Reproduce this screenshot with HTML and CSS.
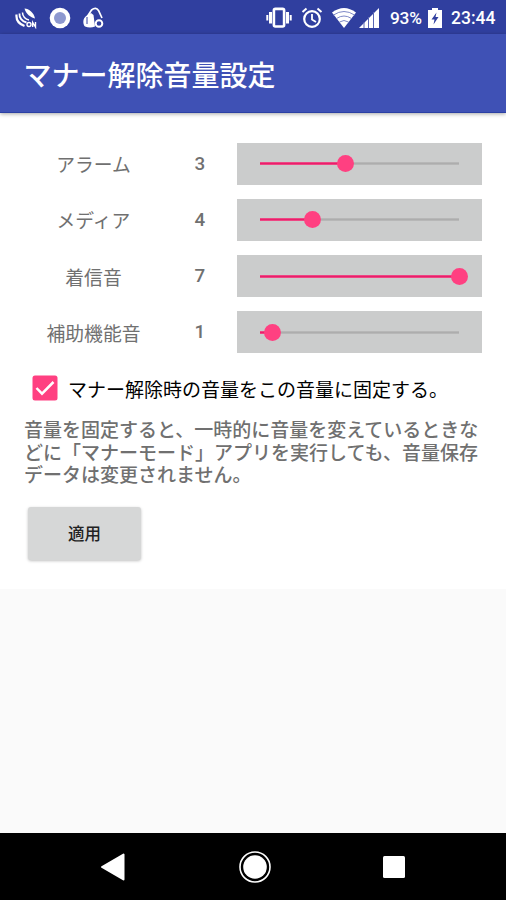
FILE: index.html
```
<!DOCTYPE html>
<html lang="ja">
<head>
<meta charset="utf-8">
<title>マナー解除音量設定</title>
<link rel="stylesheet" href="styles.css">
</head>
<body>
<header class="status">
  <svg class="ic-on" width="22" height="22" viewBox="0 0 22 22" fill="none" stroke="#fff">
    <path d="M9.500 1.500C14 1.500 19 6 20 11.500C15.500 10.500 11 7 9.500 1.500z" fill="#fff" stroke="none"/>
    <path d="M7.500 5.500c0 4 3 7 6.500 7.500" stroke-width="1.500"/>
    <path d="M4.500 6.500c-.5 4 2.500 8 7 9" stroke-width="1.800"/>
    <path d="M1.500 7.500c-.5 5 2.500 9.500 8 11.500" stroke-width="2.200"/>
    <circle cx="14" cy="17.500" r="2" stroke-width="1.400"/>
    <path d="M17.700 20v-4.500l2.800 4.500v-5" stroke-width="1.400"/>
  </svg>
  <svg class="ic-ring" width="22" height="22" viewBox="0 0 22 22">
    <circle cx="11" cy="11" r="10.300" fill="#fff"/><circle cx="11" cy="11" r="6" fill="#8d98cf"/>
  </svg>
  <svg class="ic-bag" width="22" height="22" viewBox="0 0 22 22" fill="none" stroke="#fff">
    <path d="M4 10L8.500 3Q13-.5 15.500 3.500L19 11" stroke-width="1.700"/>
    <path d="M4 8.500C-.5 11 -.5 17 2 19.500Q7 21.500 12 19.500L10.500 8L8 6z" fill="#fff" stroke="none"/>
    <path d="M4 10v7" stroke="#303f9f" stroke-width="1"/>
    <circle cx="16" cy="16.500" r="3.300" fill="#303f9f" stroke-width="2"/>
  </svg>
  <span class="spacer"></span>
  <svg class="ic-vib" width="26" height="22" viewBox="0 0 26 22">
    <rect x="7.900" y="1.900" width="10.200" height="17.600" rx="1.500" fill="none" stroke="#fff" stroke-width="2.600"/>
    <path d="M4.500 5v11.500M21.500 5v11.500" stroke="#fff" stroke-width="3"/>
    <path d="M1.300 8v5.500M24.700 8v5.500" stroke="#fff" stroke-width="2"/>
  </svg>
  <svg class="ic-alarm" width="22" height="22" viewBox="0 0 22 22" fill="none" stroke="#fff">
    <circle cx="11" cy="12" r="7.800" stroke-width="2.200"/><path d="M11 7v5.500l4 2.500" stroke-width="1.800"/>
    <path d="M1.500 5l4-3.500M20.500 5l-4-3.500" stroke-width="2"/>
  </svg>
  <svg class="ic-wifi" width="26" height="22" viewBox="0 0 26 22">
    <path d="M1 5.500Q13-3.500 25 5.500L13 21z" fill="#fff"/>
    <path d="M2.500 8Q13 1 23.500 8M5.500 11.500Q13 6.500 20.500 11.500M8.500 15Q13 12 17.500 15" fill="none" stroke="#7f8ac7" stroke-width="1"/>
  </svg>
  <svg class="ic-signal" width="20" height="20" viewBox="0 0 20 20">
    <path d="M0 20L20 0v20z" fill="#fff"/><path d="M5 14v6M9.500 9v11M14.500 4v16" stroke="#5966b5" stroke-width="1"/>
  </svg>
  <span class="percent">93%</span>
  <svg class="ic-batt" width="14" height="20" viewBox="0 0 14 20">
    <path d="M4 0h6v2h4v18H0V2h4z" fill="#fff"/><path d="M8.500 4.500L3.500 11.500h3L5.500 16.500l5-7.500h-3z" fill="#303f9f"/>
  </svg>
  <span class="clock">23:44</span>
</header>
<h1 class="appbar">マナー解除音量設定</h1>
<main class="content">
  <div class="row"><span class="label">アラーム</span><span class="num">3</span><div class="slider"><div class="track"><div class="fill" style="width:42.860%"></div></div></div></div>
  <div class="row"><span class="label">メディア</span><span class="num">4</span><div class="slider"><div class="track"><div class="fill" style="width:26.670%"></div></div></div></div>
  <div class="row"><span class="label">着信音</span><span class="num">7</span><div class="slider"><div class="track"><div class="fill" style="width:100%"></div></div></div></div>
  <div class="row"><span class="label">補助機能音</span><span class="num">1</span><div class="slider"><div class="track"><div class="fill" style="width:6.670%"></div></div></div></div>
  <div class="check">
    <svg width="26" height="26" viewBox="0 0 26 26"><rect x=".5" y=".5" width="25" height="25" rx="2.500" fill="#ff4081"/><path d="M4.500 13l5.500 5.700L21.500 7" fill="none" stroke="#fff" stroke-width="2.500"/></svg>
    <span>マナー解除時の音量をこの音量に固定する。</span>
  </div>
  <p class="note">音量を固定すると、一時的に音量を変えているときな<br>どに「マナーモード」アプリを実行しても、音量保存<br>データは変更されません。</p>
  <button class="apply">適用</button>
</main>
<nav class="nav">
  <svg width="26" height="30" viewBox="0 0 26 30"><path d="M2 15L23.500 2.500v25z" fill="#fff" stroke="#fff" stroke-width="2" stroke-linejoin="round"/></svg>
  <svg width="34" height="34" viewBox="0 0 34 34"><circle cx="17" cy="17" r="15" fill="none" stroke="#fff" stroke-width="1.600"/><circle cx="17" cy="17" r="11.800" fill="#fff"/></svg>
  <svg width="22" height="22" viewBox="0 0 22 22"><rect width="22" height="22" rx="1.500" fill="#fff"/></svg>
</nav>
</body>
</html>
```
FILE: styles.css
```
* { box-sizing: border-box; }
body {
  margin: 0;
  height: 900px;
  display: flex;
  flex-direction: column;
  overflow: hidden;
  background: #fafafa;
  font-family: Roboto, "Noto Sans CJK JP", sans-serif;
  color: #707070;
}
svg { display: block; flex: none; }
.status {
  height: 34px;
  flex: none;
  display: flex;
  align-items: center;
  padding: 1px 11px 0 15px;
  background: #303f9f;
  color: #fff;
  font-size: 17.500px;
  font-weight: 500;
}
.ic-ring { margin-left: 12px; }
.ic-bag { margin-left: 12px; }
.spacer { flex: 1; }
.ic-alarm { margin-left: 9px; }
.ic-wifi { margin-left: 8px; }
.ic-signal { margin-left: 2px; }
.percent { width: 32px; margin-left: 11px; font-size: 17.300px; letter-spacing: -0.200px; white-space: nowrap; }
.ic-batt { margin-left: 6px; }
.clock { width: 44px; margin-left: 9px; white-space: nowrap; }
.appbar {
  height: 79px;
  flex: none;
  margin: 0;
  padding: 3px 23.500px 0;
  background: #3f51b5;
  border-bottom: 1px solid #2c40a4;
  box-shadow: 0 1px 4px rgba(0, 0, 0, .35);
  color: #fff;
  font-size: 28px;
  font-weight: 500;
  line-height: 80px;
  z-index: 1;
}
.content {
  height: 476px;
  flex: none;
  padding: 29.700px 24px 0;
  background: #fff;
}
.row {
  height: 42px;
  margin-bottom: 14.200px;
  display: flex;
  align-items: center;
  font-size: 18.800px;
}
.label { width: 139px; text-align: center; }
.num { width: 73.500px; text-align: center; font-weight: 500; }
.slider {
  width: 245px;
  height: 42px;
  padding: 19.500px 22.500px 0 23px;
  background: #cbcccc;
}
.track {
  height: 3px;
  background: linear-gradient(#bcbcbc, #adadad 50%, #bcbcbc);
}
.fill {
  height: 3px;
  background: linear-gradient(#f05a8f, #e91e6b 50%, #f05a8f);
  position: relative;
}
.fill::after {
  content: "";
  position: absolute;
  right: -8.500px;
  top: -7px;
  width: 17px;
  height: 17px;
  border-radius: 50%;
  background: #ff4081;
}
.check {
  height: 28px;
  margin-top: 21px;
  padding-left: 8px;
  display: flex;
  align-items: center;
  gap: 10px;
  color: #000;
  font-size: 19px;
  white-space: nowrap;
}
.note {
  margin: 18px 0 0;
  font-size: 19px;
  font-weight: 500;
  line-height: 22.500px;
  white-space: nowrap;
}
.apply {
  display: block;
  width: 113px;
  height: 53px;
  margin: 19px 0 0 4px;
  padding: 0;
  border: 0;
  border-radius: 3px;
  background: #d6d7d7;
  box-shadow: 0 1px 3px rgba(0, 0, 0, .25);
  color: #222;
  font: 500 16.500px Roboto, "Noto Sans CJK JP", sans-serif;
}
.nav {
  height: 67px;
  flex: none;
  margin-top: auto;
  padding: 0 101px 0 100px;
  display: flex;
  align-items: center;
  justify-content: space-between;
  background: #000;
}
```
